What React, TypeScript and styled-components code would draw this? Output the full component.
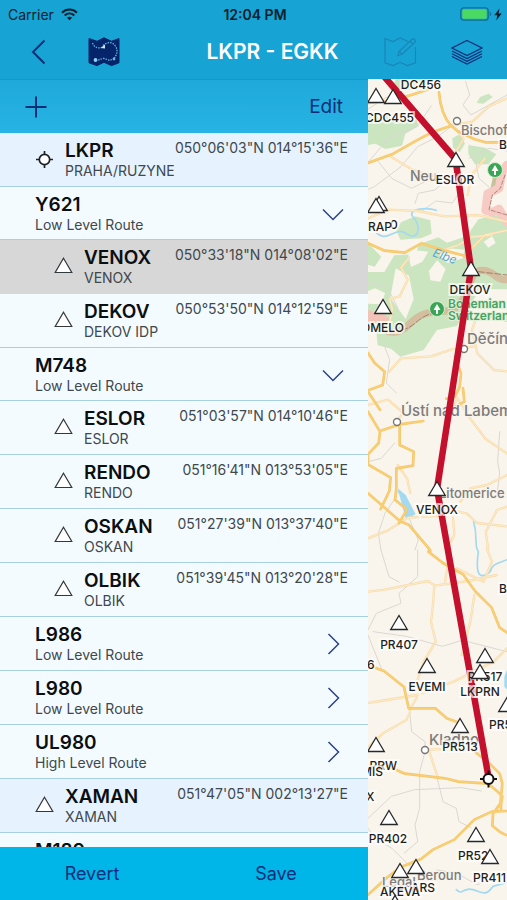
import React, { useState } from "react";
import styled, { createGlobalStyle } from "styled-components";

const GlobalStyle = createGlobalStyle`
  * { box-sizing: border-box; }
  html, body { margin: 0; }
  body {
    font-family: Inter, "Liberation Sans", sans-serif;
    color: #0b0f12;
    background: #f8f4ec;
  }
  button { font: inherit; color: inherit; background: none; border: 0; padding: 0; cursor: pointer; }
  button:disabled { cursor: default; }
  svg { display: block; }
`;

const navy = "#0a2f78";

const Screen = styled.div`
  display: flex;
  flex-direction: column;
  height: 100vh;
  overflow: hidden;
`;

const Header = styled.header`
  flex: none;
  height: 79px;
  background: #18a3d5;
`;

const StatusBar = styled.div`
  display: grid;
  grid-template-columns: 1fr auto 1fr;
  align-items: center;
  height: 28px;
  padding: 0 5px 0 8px;
  font-size: 14px;
  color: #08212c;
`;

const StatusGroup = styled.div<{ $end?: boolean }>`
  display: flex;
  align-items: center;
  gap: ${(p) => (p.$end ? 2 : 7)}px;
  justify-content: ${(p) => (p.$end ? "flex-end" : "flex-start")};
`;

const Clock = styled.time`
  font-weight: 600;
`;

const NavBar = styled.nav`
  display: flex;
  align-items: center;
  height: 48px;
  padding: 0 24px 0 28px;
`;

const NavGroup = styled.div<{ $gap: number }>`
  flex: 1 1 0;
  display: flex;
  gap: ${(p) => p.$gap}px;
  align-items: center;
  &:last-child { justify-content: flex-end; }
`;

const Title = styled.h1`
  margin: 0;
  padding-left: 34px;
  font-size: 21px;
  line-height: 24px;
  font-weight: 600;
  color: #fff;
  white-space: nowrap;
`;

const IconButton = styled.button`
  display: flex;
  color: ${navy};
  &:disabled { color: #1787b6; }
`;

const Body = styled.main`
  flex: 1;
  min-height: 0;
  display: flex;
`;

const Sidebar = styled.section`
  flex: none;
  width: 368px;
  display: flex;
  flex-direction: column;
  background: #f3fbff;
`;

const Toolbar = styled.div`
  flex: none;
  display: flex;
  align-items: center;
  justify-content: space-between;
  height: 54px;
  padding: 0 25px;
  border-top: 1px solid #1798c8;
  background: linear-gradient(#1fa9db, #28b3e5);
`;

const TextButton = styled.button<{ $size: number }>`
  font-size: ${(p) => p.$size}px;
  line-height: 24px;
  color: ${navy};
`;

const List = styled.ul`
  flex: 1;
  min-height: 0;
  margin: 0;
  padding: 0;
  overflow: hidden;
  list-style: none;
`;

const Row = styled.li<{ $kind: "airport" | "route" | "point"; $open?: boolean; $selected?: boolean }>`
  display: flex;
  align-items: flex-start;
  height: ${(p) => (p.$open ? 53 : 54)}px;
  padding: 6px 20px 0 ${(p) => (p.$kind === "point" ? 54 : 35)}px;
  border-bottom: 1px solid ${(p) => (p.$selected ? "#d7d7d7" : "#a9cfe3")};
  background: ${(p) => (p.$selected ? "#d7d7d7" : p.$kind === "airport" ? "#e6f3ff" : "#f3fbff")};
`;

const Marker = styled.span`
  flex: none;
  width: 30px;
  padding-top: 11px;
`;

const Labels = styled.div`
  flex: 1;
  min-width: 0;
`;

const Name = styled.div`
  font-size: 19px;
  line-height: 24px;
  font-weight: 600;
  white-space: nowrap;
`;

const Detail = styled.div`
  font-size: 14px;
  line-height: 16px;
  color: #40484d;
  white-space: nowrap;
`;

const Coordinates = styled.div`
  font-size: 14px;
  line-height: 18px;
  color: #40484d;
  white-space: nowrap;
`;

const Toggle = styled.button`
  width: 30px;
  height: 42px;
  display: flex;
  align-items: center;
  justify-content: center;
  color: #2c4384;
`;

const Footer = styled.footer`
  flex: none;
  display: grid;
  grid-template-columns: 1fr 1fr;
  align-items: center;
  height: 53px;
  background: #00b5e8;
`;

const MapPane = styled.section`
  flex: 1;
  min-width: 0;
  overflow: hidden;
  svg { width: 100%; height: 100%; }
`;

type Item = {
  kind: "airport" | "route" | "point";
  name: string;
  detail: string;
  coords?: string;
  target?: boolean;
  open?: boolean;
};

const items: Item[] = [
  { kind: "airport", name: "LKPR", detail: "PRAHA/RUZYNE", coords: `050°06'03"N 014°15'36"E`, target: true },
  { kind: "route", name: "Y621", detail: "Low Level Route", open: true },
  { kind: "point", name: "VENOX", detail: "VENOX", coords: `050°33'18"N 014°08'02"E` },
  { kind: "point", name: "DEKOV", detail: "DEKOV IDP", coords: `050°53'50"N 014°12'59"E` },
  { kind: "route", name: "M748", detail: "Low Level Route", open: true },
  { kind: "point", name: "ESLOR", detail: "ESLOR", coords: `051°03'57"N 014°10'46"E` },
  { kind: "point", name: "RENDO", detail: "RENDO", coords: `051°16'41"N 013°53'05"E` },
  { kind: "point", name: "OSKAN", detail: "OSKAN", coords: `051°27'39"N 013°37'40"E` },
  { kind: "point", name: "OLBIK", detail: "OLBIK", coords: `051°39'45"N 013°20'28"E` },
  { kind: "route", name: "L986", detail: "Low Level Route" },
  { kind: "route", name: "L980", detail: "Low Level Route" },
  { kind: "route", name: "UL980", detail: "High Level Route" },
  { kind: "airport", name: "XAMAN", detail: "XAMAN", coords: `051°47'05"N 002°13'27"E` },
  { kind: "route", name: "M189", detail: "Low Level Route" },
];

const TriangleIcon = () => (
  <svg width="19" height="17" viewBox="0 0 19 17">
    <path d="M9.5 1.2 17.8 15.5H1.2Z" fill="#fff" stroke="#33383c" strokeWidth="1.2" />
  </svg>
);

const TargetIcon = () => (
  <svg width="19" height="19" viewBox="0 0 19 19" fill="none" stroke="#1c2225" strokeWidth="1.7">
    <circle cx="9.5" cy="9.5" r="5.2" fill="#fff" />
    <path d="M9.5 1v3.4M9.5 14.6V18M1 9.5h3.4M14.6 9.5H18" />
  </svg>
);

const Chevron = ({ open }: { open?: boolean }) =>
  open ? (
    <svg width="22" height="13" viewBox="0 0 22 13" fill="none" stroke="currentColor" strokeWidth="1.5">
      <path d="m1 1.5 10 10 10-10" />
    </svg>
  ) : (
    <svg width="13" height="22" viewBox="0 0 13 22" fill="none" stroke="currentColor" strokeWidth="1.5">
      <path d="m1.5 1 10 10-10 10" />
    </svg>
  );

const WifiIcon = () => (
  <svg width="17" height="13" viewBox="0 0 17 13" fill="none" stroke="#08212c" strokeWidth="2.1">
    <path d="M1 4.7c4.3-4.2 10.7-4.2 15 0M3.7 7.500c2.8-2.7 6.8-2.7 9.6 0" />
    <path d="M8.5 12.3 5.9 9.7c1.5-1.3 3.7-1.3 5.2 0Z" fill="#08212c" stroke="none" />
  </svg>
);

const BatteryIcon = () => (
  <svg width="32" height="14" viewBox="0 0 32 14">
    <rect x=".8" y=".8" width="27.4" height="12.4" rx="3" fill="none" stroke="#0e6f97" strokeWidth="1.3" />
    <rect x="2.3" y="2.3" width="24.4" height="9.4" rx="1.5" fill="#4bd964" />
    <path d="M29.8 4.8v4.4q1.4-.6 1.4-2.2t-1.4-2.2" fill="#0e6f97" />
  </svg>
);

const BoltIcon = () => (
  <svg width="8" height="13" viewBox="0 0 8 13">
    <path d="M5.5.5.3 7.3h3L2.3 12.5 7.7 5.5H4.6Z" fill="#08212c" />
  </svg>
);

const BackIcon = () => (
  <svg width="20" height="26" viewBox="0 0 20 26" fill="none" stroke="currentColor" strokeWidth="2">
    <path d="M16.5 1.5 5 13l11.5 11.5" />
  </svg>
);

const sheet = "M1 1.5 9 4.3 16 .8l7.5 3.5L31 1.5v24.300l-7.5 2.8-7.5-3.3-7 3.3-8-2.8Z";

const RouteMapIcon = () => (
  <svg width="32" height="30" viewBox="0 0 32 30" fill="none">
    <path d={sheet} fill="#06246a" stroke="#06246a" strokeLinejoin="round" />
    <path
      d="M4.500 6c2 4.500 5 5.500 9 4.500M15 8.500c4-3.500 9-4 12 0 3.500 5 2 9-1 13M24 22.500c-4 2-6-1.500-9-1s-4 2-7 1.500"
      stroke="#65b7e0"
      strokeWidth="1.300"
      strokeDasharray="1.500 1.100"
    />
    <path d="m12.500 11 4.500-3.500v4Z" fill="#c6ebfa" />
    <circle cx="7.500" cy="23" r="1.900" fill="#8dd3f1" />
    <circle cx="26" cy="22" r="1.400" fill="#65b7e0" />
  </svg>
);

const EditMapIcon = () => (
  <svg width="34" height="30" viewBox="0 0 34 30" fill="none" stroke="currentColor" strokeWidth="1.2">
    <path d="M24 4.5 23.500 4.3 16 1 9 4.5 1 1.500v24.300l8 2.800 7-3.300 7.500 3.300 8-2.800V10" />
    <path d="m14 18.500 1.200-4.300L27.500 2.800q2-1.700 3.300-.2t-.4 3.200L18 17.300Zm1.200-4.300 2.800 3.100M26 4.200l3 3.100" />
  </svg>
);

const LayersIcon = () => (
  <svg width="32" height="26" viewBox="0 0 32 26" fill="none" stroke="currentColor" strokeWidth="1.2">
    <path d="M16 1.500 31 9l-15 7.500L1 9Z" />
    <path d="m1 12 15 7.500L31 12M1 14.800l15 7.500 15-7.500M1 17.500 16 25l15-7.500" />
  </svg>
);

const greens = [
  "M9 120l30 10 26-14 30 24 60-6 6 20-40 22-10 36-50 10-30-16-32 6Z",
  "M95 12h92l-22 26-50 10-32-18Z",
  "M262 190l24-14 14 30-16 26-20-14Z",
  "M345 66l26-10 12 10-28 20-20-2Z",
  "M310 210l50 8 34 20-24 30-40 0-20-30Z",
  "M108 442 150 424l46 12 4 40-32 14-62 4-12-28Z",
  "M170 505l50-18 26 16 60-20 34-50 86-20v230l-80 0-40 60-30 50-60 12-40 60-70 20-28-24-40-10-4-40-36-30-24-50 20-20-26-40 30-40 60 0 30-50 64-4 12-34Z",
  "M9 505l40 40-20 30-20-6Z",
];

const clearings = [
  "M92 580l40 22 14 70-24 60-46-64Z",
  "M192 588l24-32 26 26-16 38-30-4Z",
  "M222 540l26-20 50 4-4 26-46 14Z",
  "M130 540l20-14 40 4-18 30-34 16Z",
  "M356 500l26-16 10 20-22 14Z",
  "M30 640l30 14-10 34-41-2v-38Z",
];

const minorRoads = [
  "M9 102 90 52l70-24 32-16M9 262l60-70 90-40 40-60",
  "M258 155l-40 30-60 30-50 60-80 60-19 8M302 20l12 40-20 30 24 30 108-60",
  "M40 260l40 50 60 30 40-20M150 385l10-30 50-10 60-55M312 250l60-30 54 8",
  "M172 408l40-30 50 6 20-30M330 250l12 60 30 26",
  "M9 620l60 20 30 60M352 720l74 20M56 808l18 46-10 70 30 30",
  "M404 1070l-6 90 6 34-6 50M9 1160l40-10 40-46",
  "M48 1425l-8-50 20-60 34-50M150 1425l10-30-30-70",
  "M158 1425v80l-56 50 6 30-74 30-25 50M48 1425l24 80 30 16M24 1670l100 14 108 30 60-18 134 34",
  "M9 1680l40 100",
  "M9 2230l70-66 70-20 140-6 60 10M134 1910l6 60 40 30v30l-16 60v110l-14 50 8 50-40 34M214 2100l20 80 40 20 8 40 36 18",
  "M9 2260l20 30 52 30 60 60M216 2385l60 10 60 34 90-30",
];

const paleRoads = [
  "M262 150l60-10 50-46 54-24M9 430l60-26 90 4 80 16 100-4 86 20",
  "M272 160l24 32-24 38M70 240l72 44 60 20",
  "M360 250l-40 50-12 60M300 500l20 20 40-40 66-14",
  "M132 548l-24 30 20 36-24 50-30 8 8 30-8 40-74 10M220 530l60-20 40-24 60-6",
  "M72 890l36-40 90-6 60-20 70-10M335 725l-14 40 16 70 50 50 39 4",
  "M9 990l60-16 46 40-20 24M258 1000l20-30 34 56 50 66 64 44",
  "M240 1300l66 16 30 28 90 10M370 1425l-8-54 34-66 30-10",
  "M264 1328l4 50-20 46M426 1200l-60 30-50 10-30 40M98 1170l28 40 10 44M9 1390l60-24 60-38 100-6",
  "M9 1550l50-6 130-26 20 14 100-14 86-18M208 1530l-4 60-6 50 14 60-36 60-20 60M328 1560l-12 80-26 100M426 1720l-40 40-120 60-110 40-147 24M156 1866l-22 40",
  "M240 1520l10-60M275 1480l80 40 26-60-16-40",
  "M134 1915l-10 20-70 40-45 42",
  "M193 2030l26 80M193 2024l120-4",
];

const mainRoads = [
  "M222 52c4 50 18 80 36 100M9 264l76-28 70-40 50-26 54-18 18 16 50 24 34 10 65 0M9 84l50-4 80-20 60-20",
  "M9 505l50 22 60 6 50-28 70 22 55 14 20 10",
  "M9 834l20 30 30 26-6 40-44 16M270 845l18 50-4 40-14 30-26 6",
  "M9 950l36 54M9 1010l36 60-4 34-32 34v30l68 40-4 40-26 54M45 1068l60-20 70-10M104 1050v60l42 20-2 42-50 8v60l-4 34 36 30-24 40M9 1255l40 34 56 50 26 10 56 66 9 12M294 940l4 40-26 14",
  "M190 1430l44 34 60 34 36 50 50 50 24 60 32 22M9 1770l48 18 60 48 14 64 80 0 34 30 40 14",
  "M60 2070l60 26 120 14 40 10 90 6 30 26 12 12-4 24v16M330 2030l44 36 30 30 8 30-6 60-22 30-2 36 24 20 22 10M426 2208l-46 2-52 24-60 60-64 30-36 28-60 24-40 30-60 54",
];

const water = [
  "M30 470c40 40 60-20 94 6s50-20 20-50c-20-24 40-30 70-20",
  "M326 1340c14 50 0 70 14 90-8 60-2 90 36 60 4-24 24-24 50-36",
  "M274 2444c20 20 20-10 50 0s40 20 60-10l42-12",
  "M100 1250l20 24 4 40 26 14",
];

type Pin = [number, number];
const pins: Pin[] = [
  [376, 96], [393, 97], [379, 204], [376, 206], [456, 160], [383, 307], [471, 269], [437, 489],
  [399, 623], [427, 666], [485, 656], [480, 672], [507, 705], [460, 726], [376, 745], [389, 818],
  [476, 835], [490, 857], [400, 871], [416, 867], [395, 903],
];

type Tag = [string, number, number, "start" | "middle" | "end"];
const tags: Tag[] = [
  ["DC456", 421, 89, "middle"], ["CDC455", 414, 122, "end"], ["ESLOR", 455, 184, "middle"],
  ["0", 390, 229, "start"], ["RAP", 368, 231, "start"], ["B", 499, 149, "start"], ["DEKOV", 470, 294, "middle"],
  ["OMELO", 404, 332, "end"], ["VENOX", 437, 514, "middle"], ["PR407", 399, 649, "middle"],
  ["6", 367, 669, "start"], ["EVEMI", 427, 691, "middle"], ["PR517", 485, 681, "middle"],
  ["LKPRN", 480, 696, "middle"], ["B", 499, 593, "start"], ["PR52", 489, 729, "start"],
  ["PR513", 460, 751, "middle"], ["PRW", 397, 770, "end"], ["MIS", 383, 776, "end"],
  ["X", 366, 801, "start"], ["PR402", 388, 843, "middle"], ["PR52", 458, 860, "start"],
  ["PR411", 473, 882, "start"], ["ARS", 435, 892, "end"], ["AKEVA", 400, 896, "middle"],
];

const towns: [string, number, number, number][] = [
  ["Bischofswerda", 461, 135, 13], ["Neu", 410, 181, 14], ["Děčín", 467, 344, 15],
  ["Ústí nad Labem", 401, 416, 15], ["Litomerice", 439, 498, 13], ["Kladno", 429, 745, 15],
  ["Beroun", 417, 880, 13], ["Legal", 382, 887, 13],
];

const townDots: Pin[] = [[457, 121], [464, 349], [397, 422], [425, 750]];

const Terrain = styled.g`
  fill: none;
  stroke-linejoin: round;
  stroke-linecap: round;
`;
const MapTag = styled.text`
  font-size: 12px;
  font-weight: 500;
  fill: #1e1f20;
  stroke: rgba(255, 255, 255, 0.7);
  stroke-width: 4px;
  paint-order: stroke;
`;
const Town = styled.text<{ $size: number }>`
  font-size: ${(p) => p.$size}px;
  font-weight: 500;
  fill: #7c7b7a;
  stroke: #f8f4ec;
  stroke-width: 2px;
  paint-order: stroke;
`;
const ParkName = styled.text`
  font-size: 12px;
  font-weight: 600;
  fill: #46a365;
  stroke: #e3f0d8;
  stroke-width: 2px;
  paint-order: stroke;
`;
const RiverName = styled.text`
  font-size: 12px;
  font-style: italic;
  fill: #54a5cc;
`;

const strokes = (paths: string[], color: string, width: number) =>
  paths.map((d) => <path key={d} d={d} stroke={color} strokeWidth={width} />);

const Park = ({ x, y }: { x: number; y: number }) => (
  <g transform={`translate(${x} ${y})`}>
    <circle r="7.5" fill="#3aa554" stroke="#d7eccf" />
    <path d="M0-5 3.5 1H1v4h-2V1h-2.5Z" fill="#fff" />
  </g>
);

const RouteMap = () => (
  <svg viewBox="368 79 139 821" preserveAspectRatio="xMinYMin slice" role="img" aria-label="Route map">
    <rect x="368" y="79" width="2000" height="2000" fill="#f9f5ec" />
    <Terrain transform="translate(365 75) scale(0.33333)">
      {greens.map((d) => <path key={d} d={d} fill="#cbe5c0" />)}
      {clearings.map((d) => <path key={d} d={d} fill="#f9f5ec" />)}
      <path d="M394 260l-20 90 30 0Z" fill="#c6c39a" />
      <path
        d="M426 270l-14 20-10 50-34 16-6 50 20 6 20-10 24 40"
        stroke="#f6cbc4"
        strokeWidth="26"
      />
      <path d="M420 300l-14 40-24 20-10 44 20 6 34 10" stroke="#b5867a" strokeWidth="3" strokeDasharray="12 6" />
      <path d="M70 770c60 10 60-40 110-54s80 6 112-40 20-90 60-90 34 30 74 28" stroke="#d3bf9f" strokeWidth="22" />
      <path d="M110 764c40-4 50-44 100-50M340 590l86 10" stroke="#a5806f" strokeWidth="3" strokeDasharray="18 7" />
      <path d="M9 705l50 14 20 16-70 10Z" fill="#f3c3b8" />
      {strokes(minorRoads, "#dad8d2", 3)}
      {strokes(water, "#a3d9f1", 5)}
      <path d="M98 1240l24 20 30 58-30 12Z" fill="#a3d9f1" />
      <path d="M426 1785l-8 20 0 30 8 8" fill="#a3d9f1" />
      {strokes(paleRoads, "#f8dba8", 7)}
      {strokes(paleRoads, "#fdeccb", 3)}
      {strokes(mainRoads, "#f4c566", 8)}
      {strokes(mainRoads, "#fad076", 4)}
    </Terrain>
    {townDots.map(([x, y]) => (
      <circle key={`${x}-${y}`} cx={x} cy={y} r="3.5" fill="#fff" stroke="#777" strokeWidth="1.4" />
    ))}
    <Park x={495} y={170} />
    <Park x={437} y={309} />
    {towns.map(([name, x, y, size]) => <Town key={name} x={x} y={y} $size={size}>{name}</Town>)}
    <ParkName x={448} y={308}>Bohemian</ParkName>
    <ParkName x={448} y={320}>Switzerland</ParkName>
    <RiverName transform="translate(432 256) rotate(20)">Elbe</RiverName>
    <path d="M382 74 455.5 159 471 269 437 489l51.5 288" fill="none" stroke="#c5102d" strokeWidth="6.5" />
    {tags.map(([name, x, y, anchor]) => (
      <MapTag key={`${name}-${y}`} x={x} y={y} textAnchor={anchor}>{name}</MapTag>
    ))}
    {pins.map(([x, y]) => (
      <path
        key={`${x}-${y}`}
        transform={`translate(${x} ${y})`}
        d="M0-7.500 8.300 6.500H-8.300Z"
        fill="#fff"
        stroke="#26282a"
        strokeWidth="1.3"
      />
    ))}
    <g transform="translate(488.5 779)" stroke="#111" strokeWidth="2">
      <circle r="5" fill="#fff" />
      <path d="M0-8.500V-5M0 8.500V5M-8.500 0H-5M8.500 0H5" />
    </g>
  </svg>
);

export default function App() {
  const [selected, setSelected] = useState("VENOX");
  return (
    <Screen>
      <GlobalStyle />
      <Header>
        <StatusBar>
          <StatusGroup>Carrier <WifiIcon /></StatusGroup>
          <Clock>12:04 PM</Clock>
          <StatusGroup $end><BatteryIcon /><BoltIcon /></StatusGroup>
        </StatusBar>
        <NavBar>
          <NavGroup $gap={40}>
            <IconButton aria-label="Back"><BackIcon /></IconButton>
            <IconButton aria-label="Route map"><RouteMapIcon /></IconButton>
          </NavGroup>
          <Title>LKPR - EGKK</Title>
          <NavGroup $gap={33}>
            <IconButton aria-label="Edit map" disabled><EditMapIcon /></IconButton>
            <IconButton aria-label="Layers"><LayersIcon /></IconButton>
          </NavGroup>
        </NavBar>
      </Header>
      <Body>
        <Sidebar>
          <Toolbar>
            <IconButton aria-label="Add">
              <svg width="22" height="22" viewBox="0 0 22 22" stroke="currentColor" strokeWidth="2">
                <path d="M11 .5v21M.5 11h21" />
              </svg>
            </IconButton>
            <TextButton $size={19}>Edit</TextButton>
          </Toolbar>
          <List>
            {items.map((item) => (
              <Row
                key={item.name}
                $kind={item.kind}
                $open={item.open}
                $selected={item.name === selected}
                onClick={() => item.kind !== "route" && setSelected(item.name)}
              >
                {item.kind !== "route" && <Marker>{item.target ? <TargetIcon /> : <TriangleIcon />}</Marker>}
                <Labels>
                  <Name>{item.name}</Name>
                  <Detail>{item.detail}</Detail>
                </Labels>
                {item.coords ? (
                  <Coordinates>{item.coords}</Coordinates>
                ) : (
                  <Toggle aria-label={`Toggle ${item.name}`} aria-expanded={!!item.open}>
                    <Chevron open={item.open} />
                  </Toggle>
                )}
              </Row>
            ))}
          </List>
          <Footer>
            <TextButton $size={18}>Revert</TextButton>
            <TextButton $size={18}>Save</TextButton>
          </Footer>
        </Sidebar>
        <MapPane><RouteMap /></MapPane>
      </Body>
    </Screen>
  );
}
